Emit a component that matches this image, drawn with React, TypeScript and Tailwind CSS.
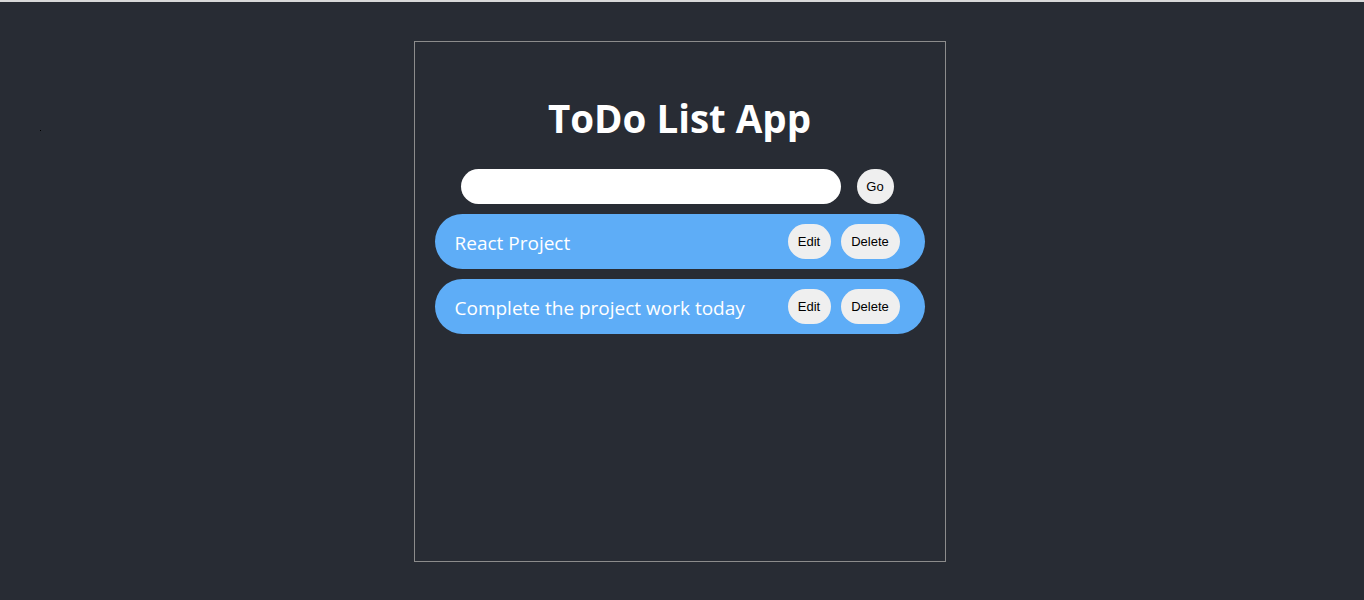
import { useState } from 'react';

interface Todo {
  id: number;
  text: string;
}

export default function App() {
  const [input, setInput] = useState('');
  const [todos, setTodos] = useState<Todo[]>([
    { id: 1, text: 'React Project' },
    { id: 2, text: 'Complete the project work today' },
  ]);

  const addTodo = () => {
    if (!input.trim()) return;
    setTodos([...todos, { id: Date.now(), text: input }]);
    setInput('');
  };

  const deleteTodo = (id: number) => {
    setTodos(todos.filter((t) => t.id !== id));
  };

  const editTodo = (id: number) => {
    const t = todos.find((x) => x.id === id);
    if (t) {
      setInput(t.text);
      deleteTodo(id);
    }
  };

  return (
    <div className="min-h-screen bg-[#282c34]">
      <div className="h-[2px] bg-[#d9d9d9]" />
      <div className="relative">
        <span className="absolute left-[40px] top-[128px] w-px h-px bg-black" />
      </div>
      <div className="pt-[39px] pr-[5px] flex justify-center">
        <div className="w-[532px] h-[521px] border border-[#8c8c8c] px-5 pt-[48px]">
          <h1 className="text-center text-white font-bold text-[38.5px] leading-[56px] font-['Open_Sans',sans-serif]">
            ToDo List App
          </h1>
          <div className="flex items-center pl-[26px] mt-[23px] mb-[10px] gap-4">
            <input
              value={input}
              onChange={(e) => setInput(e.target.value)}
              className="w-[380px] h-[35px] rounded-full bg-white px-4 outline-none text-black"
            />
            <button
              onClick={addTodo}
              className="w-[37px] h-[35px] rounded-full bg-[#efefef] text-[13px] text-black font-['Liberation_Sans',sans-serif]"
            >
              Go
            </button>
          </div>
          <div className="flex flex-col gap-[10px]">
            {todos.map((todo) => (
              <div
                key={todo.id}
                className="h-[55px] rounded-full bg-[#5eadf7] flex items-center justify-between pl-5 pr-[25px]"
              >
                <span className="text-white text-[19px] pt-[4px] font-['Open_Sans',sans-serif]">{todo.text}</span>
                <div className="flex gap-[10px]">
                  <button
                    onClick={() => editTodo(todo.id)}
                    className="h-[35px] w-[43px] rounded-full bg-[#efefef] text-[13px] text-black font-['Liberation_Sans',sans-serif]"
                  >
                    Edit
                  </button>
                  <button
                    onClick={() => deleteTodo(todo.id)}
                    className="h-[35px] w-[59px] rounded-full bg-[#efefef] text-[13px] text-black font-['Liberation_Sans',sans-serif]"
                  >
                    Delete
                  </button>
                </div>
              </div>
            ))}
          </div>
        </div>
      </div>
    </div>
  );
}
